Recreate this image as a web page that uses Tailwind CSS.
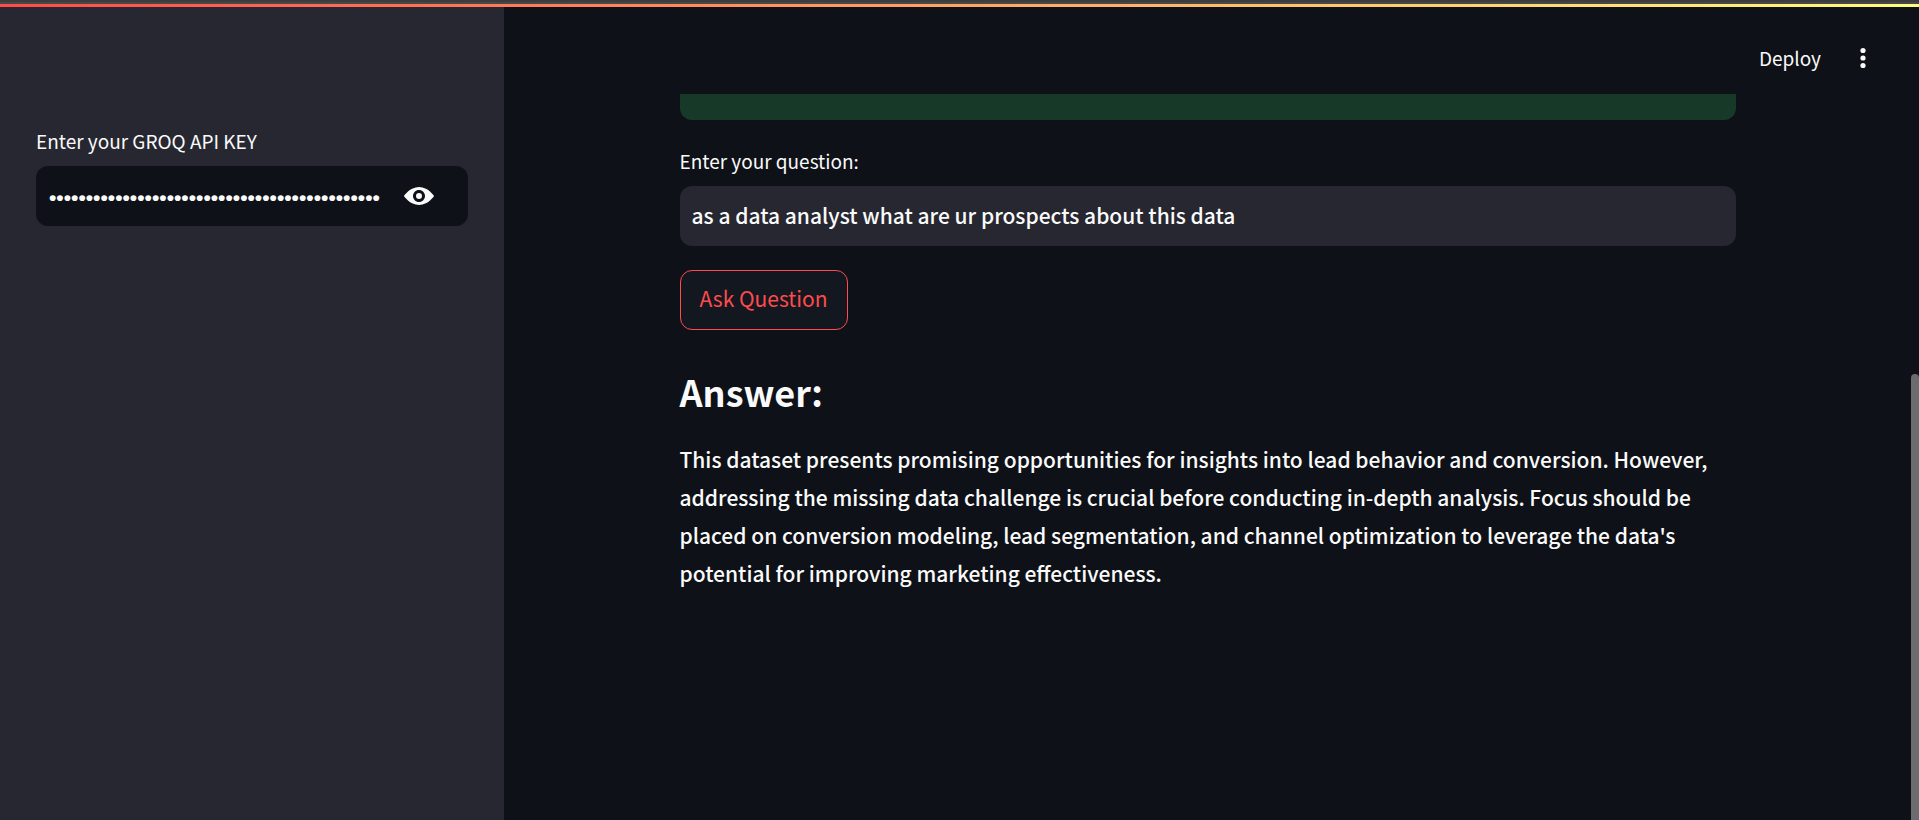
<!DOCTYPE html>
<html lang="en">
<head>
<meta charset="utf-8">
<title>Ask your data</title>
<script src="https://cdn.jsdelivr.net/npm/@tailwindcss/browser@4"></script>
</head>
<body class="flex h-screen flex-col overflow-hidden bg-[#0e1117] font-['Noto_Sans_CJK_SC',sans-serif] text-[#fafafa]">
  <div class="h-[4px] shrink-0 border-b-2 border-[#474747] bg-[#3c3c3c]"></div>
  <div class="h-[3px] shrink-0 bg-linear-to-r/srgb from-[#ff4b4b] to-[#fffd80]"></div>
  <div class="flex min-h-0 flex-1">
    <aside class="w-[504px] shrink-0 bg-[#262730] px-9 pt-[119px]">
      <label for="key" class="block pb-[10px] text-[19px] leading-[30px]">Enter your GROQ API KEY</label>
      <div class="flex h-[60px] items-center rounded-xl bg-[#0e1117] pl-3 pr-[31px]">
        <input id="key" type="password" value="gsk_0000000000000000000000000000000000000000000000000000" class="min-w-0 flex-1 bg-transparent pl-px pt-1 font-['Liberation_Sans',sans-serif] text-[21px] font-bold outline-none">
        <button type="button" aria-label="Show password" class="ml-[21px] flex h-9 w-9 items-center justify-center">
          <svg viewBox="0 0 8 8" class="h-[30px] w-[30px]" fill="currentColor"><path d="M4.03 1.6c-2.53 0-4.03 2.4-4.03 2.4s1.5 2.4 4.03 2.4c2.47 0 3.97-2.4 3.97-2.4s-1.5-2.4-3.97-2.4zm-.03.8c.89 0 1.6.72 1.6 1.6 0 .89-.71 1.6-1.6 1.6-.88 0-1.6-.71-1.6-1.6 0-.88.72-1.6 1.6-1.6zm0 .8a.8.8 0 1 0 0 1.6.8.8 0 0 0 0-1.6z"/></svg>
        </button>
      </div>
    </aside>
    <div class="flex min-w-0 flex-1 flex-col">
      <header class="flex h-[87px] shrink-0 items-center justify-end gap-6 pr-[38px] pt-[15px]">
        <button type="button" class="text-[19px] leading-[30px]">Deploy</button>
        <button type="button" aria-label="Main menu" class="flex h-9 w-9 items-center justify-center">
          <svg viewBox="0 0 36 36" class="h-9 w-9" fill="currentColor"><circle cx="18" cy="10.5" r="2.6"/><circle cx="18" cy="18" r="2.6"/><circle cx="18" cy="25.5" r="2.6"/></svg>
        </button>
      </header>
      <main class="mr-2 flex-1 px-6">
        <div class="mx-auto max-w-[1056px]">
          <div class="h-[26px] rounded-b-xl bg-[#173928]"></div>
          <label for="question" class="block pb-[10px] pt-[26px] text-[19px] leading-[30px]">Enter your question:</label>
          <input id="question" type="text" value="as a data analyst what are ur prospects about this data" class="block h-[60px] w-full rounded-xl bg-[#262730] px-3 pb-[2px] text-[21px] font-medium outline-none">
          <button type="button" class="mt-6 h-[60px] w-[168px] rounded-xl border border-[#ff4b4b] bg-[#131720] pb-[2px] text-[21px] text-[#ff4b4b]">Ask Question</button>
          <h2 class="pt-9 text-[36px] font-bold leading-[50px]">Answer:</h2>
          <p class="pt-6 text-[21px] font-medium leading-[38px]">This dataset presents promising opportunities for insights into lead behavior and conversion. However, addressing the missing data challenge is crucial before conducting in-depth analysis. Focus should be placed on conversion modeling, lead segmentation, and channel optimization to leverage the data's potential for improving marketing effectiveness.</p>
        </div>
      </main>
    </div>
  </div>
  <div class="absolute bottom-0 right-0 top-[374px] w-2 rounded-t-full bg-[#6b6c70]"></div>
</body>
</html>
